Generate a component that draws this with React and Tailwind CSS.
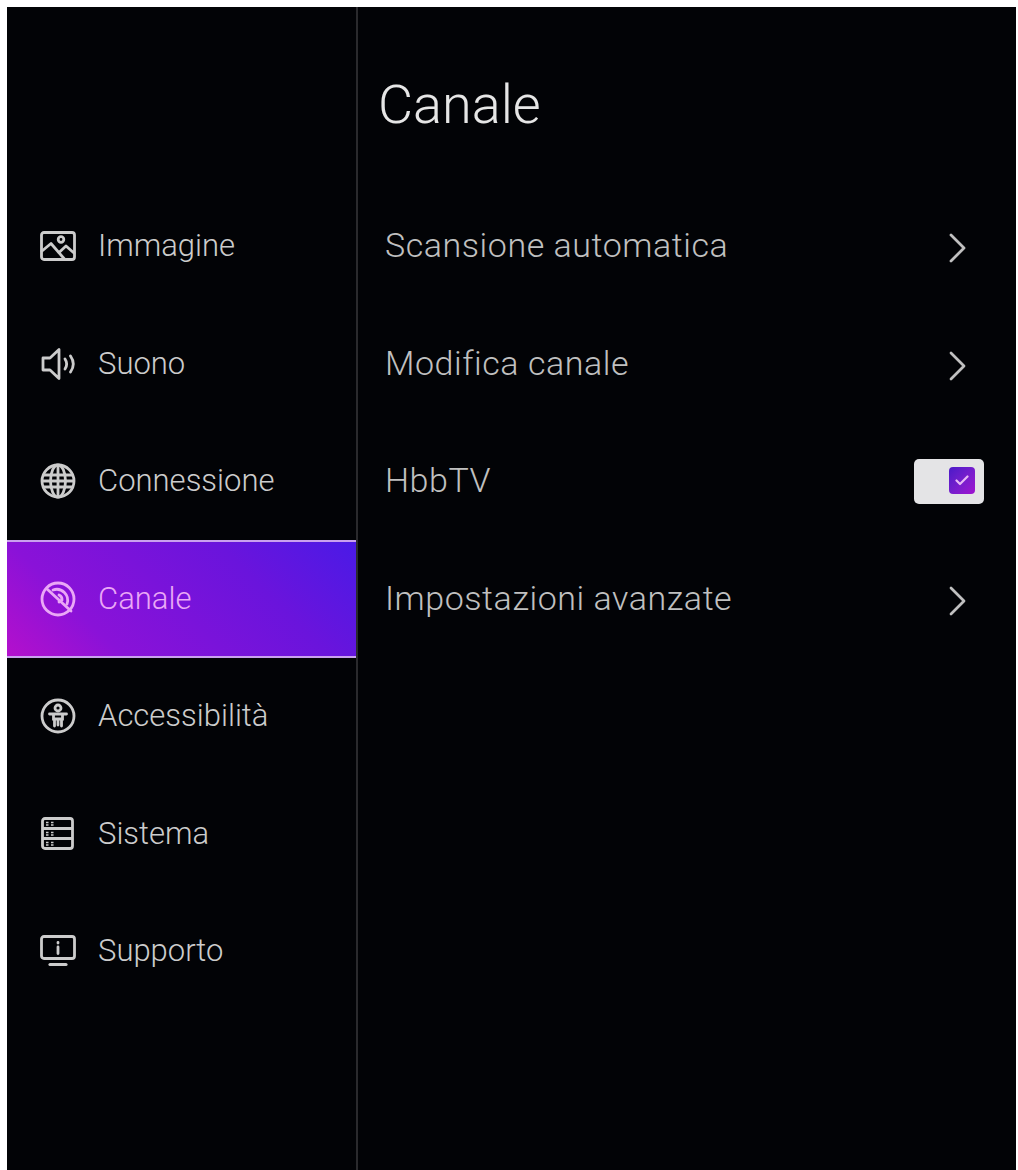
const ImageIcon = () => (
  <svg width="36" height="30" viewBox="0 0 36 30" fill="none" stroke="currentColor" strokeWidth="2.8" strokeLinejoin="round" strokeLinecap="round">
    <rect x="1.5" y="1.5" width="33" height="27" rx="2.5" />
    <circle cx="21" cy="8.5" r="2.8" />
    <path d="M2 20 L11 12.5 L24 27.5" />
    <path d="M19 21.5 L26 15 L34 22" />
  </svg>
);

const SpeakerIcon = () => (
  <svg width="34" height="34" viewBox="0 0 34 34" fill="none" stroke="currentColor" strokeWidth="2.8" strokeLinejoin="round" strokeLinecap="round">
    <path d="M2 11 H9 L18 2.5 V31.5 L9 23 H2 Z" />
    <path d="M24 12 C26 15 26 19 24 22" />
    <path d="M29.5 9 C33 14 33 20 29.5 25" />
  </svg>
);

const GlobeIcon = () => (
  <svg width="36" height="36" viewBox="0 0 36 36" fill="none" stroke="currentColor" strokeWidth="2.8">
    <circle cx="18" cy="18" r="16" />
    <ellipse cx="18" cy="18" rx="7.5" ry="16" />
    <path d="M18 2 V34 M4 12 H32 M4 24 H32 M2 18 H34" />
  </svg>
);

const DishIcon = () => (
  <svg width="36" height="36" viewBox="0 0 36 36" fill="none" stroke="currentColor" strokeWidth="2.8" strokeLinecap="round">
    <circle cx="18" cy="18" r="16" />
    <path d="M7 8 L31 30" />
    <path d="M13 9 A11 11 0 0 1 27 23" />
    <path d="M19 14 A5 5 0 0 1 22 19 L19 21" />
  </svg>
);

const AccessIcon = () => (
  <svg width="36" height="36" viewBox="0 0 36 36" fill="none" stroke="currentColor" strokeWidth="2.8" strokeLinecap="round">
    <circle cx="18" cy="18" r="16" />
    <circle cx="18" cy="10" r="3" />
    <path d="M9.5 16 H26.5 M13.5 16 V21 H22.5 V16 M14.5 21 V28 M21.5 21 V28 M18 21 V27" />
  </svg>
);

const SystemIcon = () => (
  <svg width="33" height="33" viewBox="0 0 33 33" fill="none" stroke="currentColor" strokeWidth="2.8">
    <rect x="1.5" y="1.5" width="30" height="30" rx="2.5" />
    <path d="M1.5 11.5 H31.5 M1.5 21.5 H31.5" />
    <path d="M5 5.5 H7.5 M10 5.5 H12.5 M5 8 H7.5 M10 8 H12.5 M5 15.5 H7.5 M10 15.5 H12.5 M5 18 H7.5 M10 18 H12.5 M5 25.5 H7.5 M10 25.5 H12.5 M5 28 H7.5 M10 28 H12.5" strokeWidth="1.5" />
  </svg>
);

const SupportIcon = () => (
  <svg width="36" height="32" viewBox="0 0 36 32" fill="none" stroke="currentColor" strokeWidth="2.8" strokeLinecap="round">
    <rect x="1.5" y="1.5" width="33" height="22" rx="2.5" />
    <path d="M18 7.5 V8 M18 12 V18.5" />
    <path d="M10 29.5 H26" strokeWidth="3.2" />
  </svg>
);

const menu = [
  { label: 'Immagine', icon: ImageIcon },
  { label: 'Suono', icon: SpeakerIcon },
  { label: 'Connessione', icon: GlobeIcon },
  { label: 'Canale', icon: DishIcon, active: true },
  { label: 'Accessibilità', icon: AccessIcon },
  { label: 'Sistema', icon: SystemIcon },
  { label: 'Supporto', icon: SupportIcon },
];

const Chevron = () => (
  <svg className="mt-[4px]" width="17" height="30" viewBox="0 0 17 30" fill="none" stroke="currentColor" strokeWidth="2.8" strokeLinecap="round" strokeLinejoin="round">
    <path d="M2 2 L15 15 L2 28" />
  </svg>
);

const Toggle = () => (
  <div className="flex h-[45px] w-[70px] items-center justify-end rounded-[5px] bg-[#e4e4e6] pr-[9px]">
    <div className="mb-[1px] flex h-[27px] w-[26px] items-center justify-center rounded-[4px] bg-gradient-to-br from-[#4a18c8] to-[#a010d0]">
      <svg width="14" height="11" viewBox="0 0 14 11" fill="none" stroke="#e8b8f4" strokeWidth="2.2" strokeLinecap="round" strokeLinejoin="round">
        <path d="M1.5 5.5 L5 9 L12.5 1.5" />
      </svg>
    </div>
  </div>
);

const options = [
  { label: 'Scansione automatica', right: <Chevron />, cell: 'pr-[50px]' },
  { label: 'Modifica canale', right: <Chevron />, cell: 'pr-[50px]' },
  { label: 'HbbTV', right: <Toggle />, cell: 'pr-[32px]' },
  { label: 'Impostazioni avanzate', right: <Chevron />, cell: 'pr-[50px]' },
];

export default function App() {
  return (
    <div className="h-[1170px] w-[1018px] overflow-hidden bg-white pl-[7px] pr-[2px] pt-[7px] font-['Roboto',sans-serif]">
      <div className="flex h-full bg-[#020306]">
        <aside className="h-full w-[351px] shrink-0 border-r-2 border-[#2a2a2d] pt-[180.5px]">
          {menu.map(({ label, icon: Icon, active }) => (
            <div
              key={label}
              className={
                active
                  ? 'flex h-[117.5px] items-center border-y-2 border-[#c9a0ee] bg-[linear-gradient(45deg,#b410cc_0%,#8a12d8_25%,#6a14dc_70%,#4a1ae6_100%)] text-[#eaa8f6]'
                  : 'flex h-[117.5px] items-center text-[#cccccc]'
              }
            >
              <div className="flex w-[91px] shrink-0 justify-center pl-[10px]">
                <Icon />
              </div>
              <span className="pb-[1px] text-[31px] font-[350] leading-none">{label}</span>
            </div>
          ))}
        </aside>

        <main className="min-w-0 flex-1">
          <h1 className="flex h-[180.5px] items-start pl-[20px] pt-[64px] text-[54px] font-[350] leading-[68px] text-[#e6e6e6]">
            Canale
          </h1>
          {options.map(({ label, right, cell }) => (
            <div key={label} className={`flex h-[117.5px] items-center justify-between pl-[27px] text-[#c0c0c0] ${cell}`}>
              <span className="pb-[2px] text-[34px] font-[350] leading-none tracking-[0.55px]">{label}</span>
              {right}
            </div>
          ))}
        </main>
      </div>
    </div>
  );
}
